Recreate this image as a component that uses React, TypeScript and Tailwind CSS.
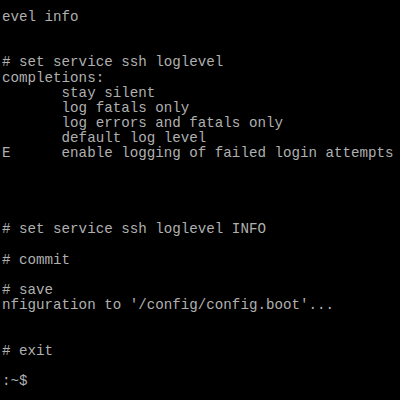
const lines = [
  "evel info",
  "",
  "",
  "# set service ssh loglevel",
  "completions:",
  "       stay silent",
  "       log fatals only",
  "       log errors and fatals only",
  "       default log level",
  "E      enable logging of failed login attempts",
  "",
  "",
  "",
  "",
  "# set service ssh loglevel INFO",
  "",
  "# commit",
  "",
  "# save",
  "nfiguration to '/config/config.boot'...",
  "",
  "",
  "# exit",
  "",
  ":~$",
];

export default function App() {
  return (
    <div className="w-[400px] h-[400px] overflow-hidden bg-black pl-[2px] pt-[9.8px]">
      <pre className="m-0 whitespace-pre text-[#b0b0b0] font-['Liberation_Mono',monospace] text-[14.2px] leading-[15.2px]">
        {lines.map((line, i) => (
          <div key={i} className="h-[15.2px]">
            {line}
          </div>
        ))}
      </pre>
    </div>
  );
}
